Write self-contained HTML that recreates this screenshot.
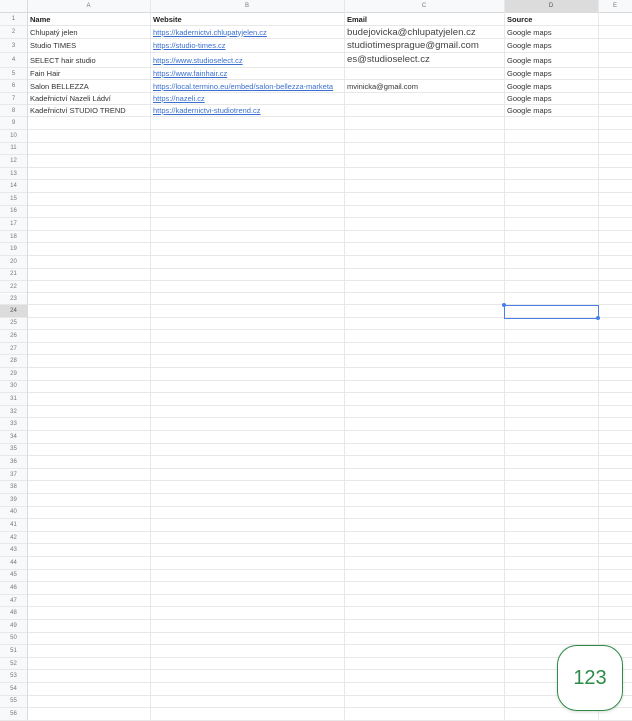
<!DOCTYPE html>
<html><head><meta charset="utf-8"><style>
*{margin:0;padding:0;box-sizing:border-box}
body{width:632px;height:720px;overflow:hidden;background:#fff;font-family:"Liberation Sans",Arial,sans-serif;position:relative;color:#333}
.r{position:absolute;left:0;width:632px;border-bottom:1px solid #e8e8e8}
.n{position:absolute;left:0;top:0;bottom:0;width:27px;background:#f8f9fa;color:#777;font-size:6px;text-align:center;display:flex;align-items:center;justify-content:center}
.v{position:absolute;top:0;height:720px;width:1px;background:#e8e8e8}
.c{position:absolute;top:0;bottom:0;display:flex;align-items:center;font-size:7.5px;white-space:nowrap;overflow:hidden}
.a{left:30px;width:118px}.b{left:153px;width:190px}.cc{left:347px;width:156px}.d{left:507px;width:90px}
.l{color:#3a6fcf;text-decoration:underline}
.e{font-size:9.6px;color:#444}
.h{font-weight:bold;color:#222}
.hd{position:absolute;top:0;height:13px;background:#f8f9fa;color:#777;font-size:6px;display:flex;align-items:center;justify-content:center;border-bottom:1px solid #dadada}
</style></head><body>
<div class="hd" style="left:0;width:27px"></div>
<div class="hd" style="left:27px;width:123px">A</div>
<div class="hd" style="left:150px;width:194px">B</div>
<div class="hd" style="left:344px;width:160px">C</div>
<div class="hd" style="left:504px;width:94px;background:#dcdcdc;color:#555">D</div>
<div class="hd" style="left:598px;width:34px">E</div>

<div class="r" style="top:13px;height:13px"><div class="n">1</div><div class="c a h">Name</div><div class="c b h">Website</div><div class="c cc h">Email</div><div class="c d h">Source</div></div>
<div class="r" style="top:26px;height:13px"><div class="n">2</div><div class="c a">Chlupatý jelen</div><div class="c b l">https://kadernictvi.chlupatyjelen.cz</div><div class="c cc e">budejovicka@chlupatyjelen.cz</div><div class="c d">Google maps</div></div>
<div class="r" style="top:39px;height:14px"><div class="n">3</div><div class="c a">Studio TIMES</div><div class="c b l">https://studio-times.cz</div><div class="c cc e" style="align-items:flex-start;padding-top:1px">studiotimesprague@gmail.com</div><div class="c d">Google maps</div></div>
<div class="r" style="top:53px;height:15px"><div class="n">4</div><div class="c a">SELECT hair studio</div><div class="c b l">https://www.studioselect.cz</div><div class="c cc e" style="align-items:flex-start;padding-top:1px">es@studioselect.cz</div><div class="c d">Google maps</div></div>
<div class="r" style="top:68px;height:12px"><div class="n">5</div><div class="c a">Fain Hair</div><div class="c b l">https://www.fainhair.cz</div><div class="c d">Google maps</div></div>
<div class="r" style="top:80px;height:13px"><div class="n">6</div><div class="c a">Salon BELLEZZA</div><div class="c b l">https://local.termino.eu/embed/salon-bellezza-marketa</div><div class="c cc">mvinicka@gmail.com</div><div class="c d">Google maps</div></div>
<div class="r" style="top:93px;height:12px"><div class="n">7</div><div class="c a">Kadeřnictví Nazeli Ládví</div><div class="c b l">https://nazeli.cz</div><div class="c d">Google maps</div></div>
<div class="r" style="top:105px;height:12px"><div class="n">8</div><div class="c a">Kadeřnictví STUDIO TREND</div><div class="c b l">https://kadernictvi-studiotrend.cz</div><div class="c d">Google maps</div></div>
<div class="r" style="top:117px;height:13px"><div class="n">9</div></div>
<div class="r" style="top:130px;height:12.6px"><div class="n">10</div></div>
<div class="r" style="top:142.6px;height:12.6px"><div class="n">11</div></div>
<div class="r" style="top:155.2px;height:12.6px"><div class="n">12</div></div>
<div class="r" style="top:167.8px;height:12.6px"><div class="n">13</div></div>
<div class="r" style="top:180.4px;height:12.6px"><div class="n">14</div></div>
<div class="r" style="top:193px;height:12.6px"><div class="n">15</div></div>
<div class="r" style="top:205.6px;height:12.6px"><div class="n">16</div></div>
<div class="r" style="top:218.2px;height:12.6px"><div class="n">17</div></div>
<div class="r" style="top:230.8px;height:12.6px"><div class="n">18</div></div>
<div class="r" style="top:243.4px;height:12.6px"><div class="n">19</div></div>
<div class="r" style="top:256px;height:12.6px"><div class="n">20</div></div>
<div class="r" style="top:268.6px;height:12.6px"><div class="n">21</div></div>
<div class="r" style="top:281.2px;height:12.3px"><div class="n">22</div></div>
<div class="r" style="top:293.5px;height:11.5px"><div class="n">23</div></div>
<div class="r" style="top:305px;height:12.6px"><div class="n" style="background:#dcdcdc;color:#555">24</div></div>
<div class="r" style="top:317.6px;height:12.6px"><div class="n">25</div></div>
<div class="r" style="top:330.2px;height:12.6px"><div class="n">26</div></div>
<div class="r" style="top:342.8px;height:12.6px"><div class="n">27</div></div>
<div class="r" style="top:355.4px;height:12.6px"><div class="n">28</div></div>
<div class="r" style="top:368px;height:12.6px"><div class="n">29</div></div>
<div class="r" style="top:380.6px;height:12.6px"><div class="n">30</div></div>
<div class="r" style="top:393.2px;height:12.6px"><div class="n">31</div></div>
<div class="r" style="top:405.8px;height:12.6px"><div class="n">32</div></div>
<div class="r" style="top:418.4px;height:12.6px"><div class="n">33</div></div>
<div class="r" style="top:431px;height:12.6px"><div class="n">34</div></div>
<div class="r" style="top:443.6px;height:12.6px"><div class="n">35</div></div>
<div class="r" style="top:456.2px;height:12.6px"><div class="n">36</div></div>
<div class="r" style="top:468.8px;height:12.6px"><div class="n">37</div></div>
<div class="r" style="top:481.4px;height:12.6px"><div class="n">38</div></div>
<div class="r" style="top:494px;height:12.6px"><div class="n">39</div></div>
<div class="r" style="top:506.6px;height:12.6px"><div class="n">40</div></div>
<div class="r" style="top:519.2px;height:12.6px"><div class="n">41</div></div>
<div class="r" style="top:531.8px;height:12.6px"><div class="n">42</div></div>
<div class="r" style="top:544.4px;height:12.6px"><div class="n">43</div></div>
<div class="r" style="top:557px;height:12.6px"><div class="n">44</div></div>
<div class="r" style="top:569.6px;height:12.6px"><div class="n">45</div></div>
<div class="r" style="top:582.2px;height:12.6px"><div class="n">46</div></div>
<div class="r" style="top:594.8px;height:12.6px"><div class="n">47</div></div>
<div class="r" style="top:607.4px;height:12.6px"><div class="n">48</div></div>
<div class="r" style="top:620px;height:12.6px"><div class="n">49</div></div>
<div class="r" style="top:632.6px;height:12.6px"><div class="n">50</div></div>
<div class="r" style="top:645.2px;height:12.6px"><div class="n">51</div></div>
<div class="r" style="top:657.8px;height:12.6px"><div class="n">52</div></div>
<div class="r" style="top:670.4px;height:12.6px"><div class="n">53</div></div>
<div class="r" style="top:683px;height:12.6px"><div class="n">54</div></div>
<div class="r" style="top:695.6px;height:12.6px"><div class="n">55</div></div>
<div class="r" style="top:708.2px;height:12.6px"><div class="n">56</div></div>

<div class="v" style="left:27px;background:#dadada"></div>
<div class="v" style="left:150px"></div>
<div class="v" style="left:344px"></div>
<div class="v" style="left:504px"></div>
<div class="v" style="left:598px"></div>

<div style="position:absolute;left:504px;top:305px;width:95px;height:14px;border:1px solid #4a80e8"></div>
<div style="position:absolute;left:502px;top:303px;width:4px;height:4px;border-radius:50%;background:#4a80e8"></div>
<div style="position:absolute;left:596px;top:316px;width:4px;height:4px;border-radius:50%;background:#4a80e8"></div>

<div style="position:absolute;left:557px;top:645px;width:66px;height:66px;border:1.5px solid #2e8b47;border-radius:20px;background:#fff;color:#2e8b47;font-size:20px;display:flex;align-items:center;justify-content:center;box-shadow:0 1px 3px rgba(0,0,0,.15)">123</div>
</body></html>
